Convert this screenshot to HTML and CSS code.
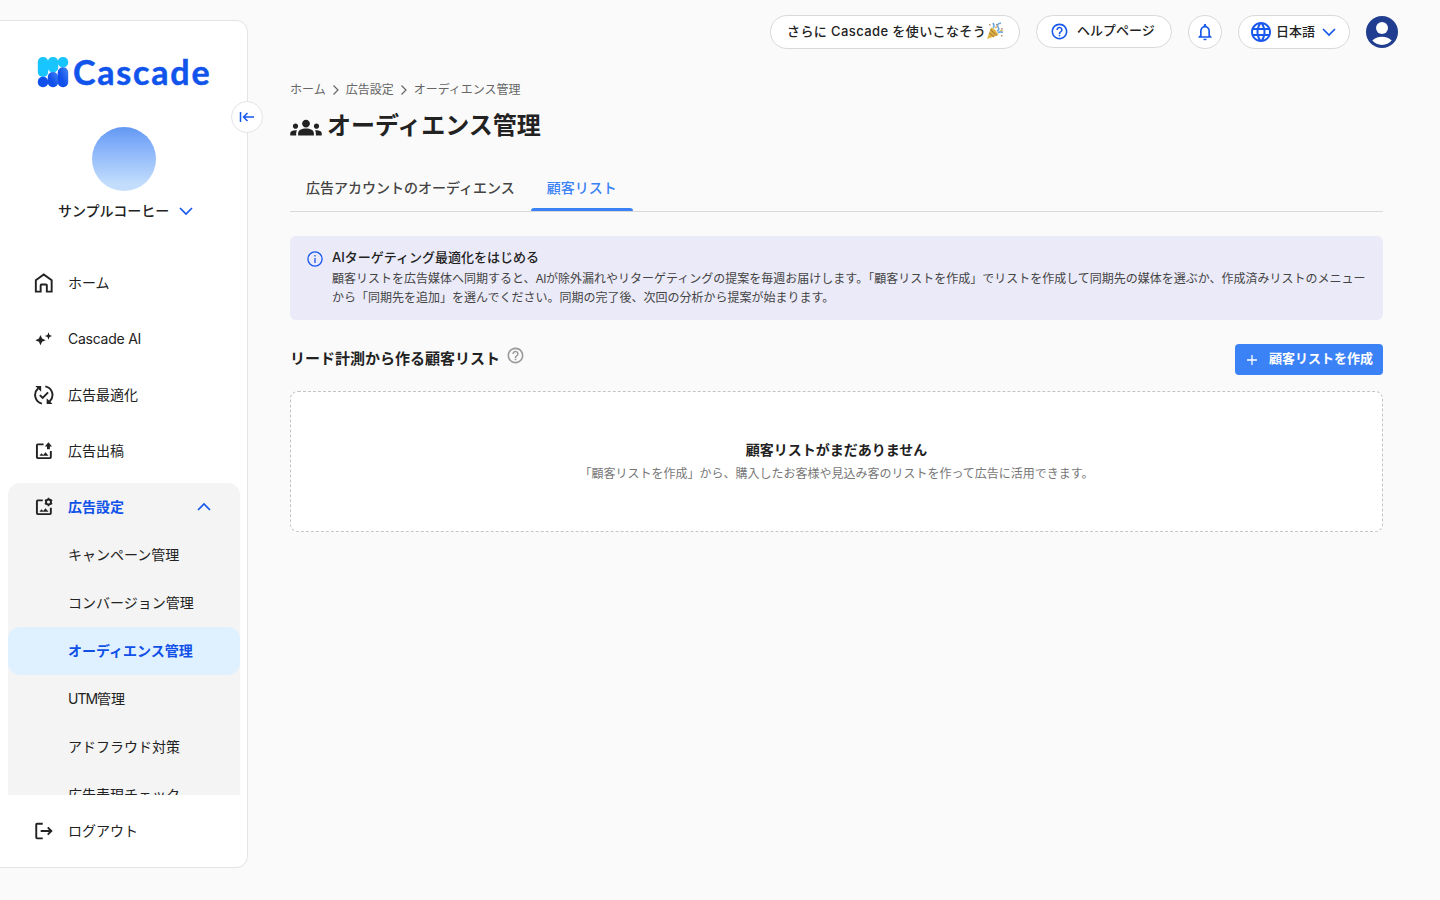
FILE: index.html
```html
<!DOCTYPE html>
<html lang="ja">
<head>
<meta charset="utf-8">
<title>オーディエンス管理 | Cascade</title>
<link rel="stylesheet" href="styles.css">
</head>
<body>
<div class="app">
  <aside class="sidebar">
    <div class="logo">
      <svg class="logo-mark" viewBox="0 0 30 30">
        <defs><linearGradient id="lg" x1="0" y1="1" x2="1" y2="0"><stop offset=".4" stop-color="#1150ea"/><stop offset="1" stop-color="#4387f6"/></linearGradient></defs>
        <rect x="-.2" y="0" width="10.400" height="20" rx="5" fill="#18c5ff"/>
        <rect x="9.800" y="0" width="10.400" height="15.500" rx="5" fill="#18c5ff"/>
        <rect x="19.800" y="0" width="10.400" height="10.400" rx="5" fill="#18c5ff"/>
        <rect x="-.2" y="19.800" width="10.400" height="10.400" rx="5" fill="#1150ea"/>
        <rect x="9.800" y="15" width="10.400" height="15.200" rx="5" fill="url(#lg)"/>
        <rect x="19.800" y="10.300" width="10.400" height="19.900" rx="5" fill="url(#lg)"/>
      </svg>
      <span class="logo-text">Cascade</span>
    </div>
    <div class="avatar"></div>
    <div class="workspace"><span>サンプルコーヒー</span><svg class="chev" viewBox="0 0 14 14"><path d="M1 4l6 6 6-6"/></svg></div>
    <nav class="nav">
      <a class="item"><svg class="ico line" viewBox="0 0 24 24"><path d="M2.200 22.300V8.700L11.700 1.700l9.500 7v13.600h-5.800v-7.500q0-1-1-1H9q-1 0-1 1v7.500z"/></svg>ホーム</a>
      <a class="item"><svg class="ico" viewBox="0 0 24 24"><path d="M7.800 7.200l1.900 4.300L14 13.400l-4.300 1.900-1.900 4.300-1.900-4.300-4.300-1.900 4.300-1.900zM17.400 4l1.200 3.200 3.200 1.200-3.200 1.200-1.200 3.200-1.200-3.200L13 8.400l3.200-1.200z"/></svg><span class="latin">Cascade AI</span></a>
      <a class="item"><svg class="ico line" viewBox="0 0 24 24"><path d="M9.500 22.300A10.600 10.600 0 0 1 4.800 4.200M13.600 1.600a10.600 10.600 0 0 1 5.100 18.200M7 12.200l3.400 3.400 6.500-6.700"/><path class="solid" d="M1.600 1.200h7v7zM22.200 22.800h-7v-7z"/></svg>広告最適化</a>
      <a class="item"><svg class="ico line" viewBox="0 0 24 24"><path d="M11.500 4H4.500q-1 0-1 1v14.500q0 1 1 1h14.700q1 0 1-1V12"/><path class="fill" d="M6.500 17.700l2.500-3 2 2 2.800-3.200 3.600 4.200zM15.600 10h3.400V6.500h2.700l-4.400-5-4.400 5h2.700z"/></svg>広告出稿</a>
      <div class="group">
        <a class="item head"><svg class="ico line" viewBox="0 0 24 24"><path d="M10.500 4h-6q-1 0-1 1v14.500q0 1 1 1h14.700q1 0 1-1V13"/><path class="fill" d="M6.500 17.700l2.500-3 2 2 2.800-3.200 3.600 4.200z"/><circle cx="17.400" cy="6" r="3"/><path class="teeth" d="M17.400 1v1.800M17.400 9.200V11M13 3.500l1.600.9M20.200 7.600l1.600.9M13 8.500l1.600-.9M20.200 4.400l1.600-.9"/></svg><b>広告設定</b><svg class="chev up" viewBox="0 0 14 14"><path d="M1 10l6-6 6 6"/></svg></a>
        <a class="sub">キャンペーン管理</a>
        <a class="sub">コンバージョン管理</a>
        <a class="sub active">オーディエンス管理</a>
        <a class="sub"><span class="utm">UTM</span>管理</a>
        <a class="sub">アドフラウド対策</a>
        <a class="sub">広告表現チェック</a>
      </div>
    </nav>
    <a class="item logout"><svg class="ico line" viewBox="0 0 24 24"><path d="M10.500 3.200H3.700q-1 0-1 1v15.600q0 1 1 1h6.800M8 12h12.800M16.500 7.700l4.300 4.300-4.300 4.300"/></svg>ログアウト</a>
    <button class="collapse"><svg viewBox="0 0 16 16"><path d="M1.500 3v10M15 8H5M8.500 4L4.500 8l4 4"/></svg></button>
  </aside>
  <div class="page">
    <header class="topbar">
      <div class="pill promo"><span>さらに <span class="brand">Cascade</span> を使いこなそう</span><svg class="party" viewBox="0 0 18 18"><path d="M1 17L5 5.500Q10 7 12.500 13z" fill="#e3b441"/><path d="M3.200 11l5 4M4.400 7.500l6.200 6" stroke="#a9843b" stroke-width="1.100"/><path d="M7 6q2-2 0-5M11 9q3-1 1-4t3-4M12 11q2-2 5-.5" fill="none" stroke="#6da7df" stroke-width="1.600"/><path d="M3 2h1.500v1.500H3zM10 2h1.500v1.500H10zM15 6h1.600v1.600H15zM15 13h1.600v1.600H15z" fill="#bd9478"/><path d="M9 6l2-1.500M14 9l3-1" stroke="#e0b352" stroke-width="1.300"/></svg></div>
      <div class="pill help"><svg class="help-ico" viewBox="0 0 24 24"><path d="M11 18h2v-2h-2v2zm1-16C6.480 2 2 6.480 2 12s4.480 10 10 10 10-4.480 10-10S17.520 2 12 2zm0 18c-4.410 0-8-3.590-8-8s3.590-8 8-8 8 3.590 8 8-3.590 8-8 8zm0-14c-2.210 0-4 1.790-4 4h2c0-1.100.9-2 2-2s2 .9 2 2c0 2-3 1.750-3 5h2c0-2.250 3-2.500 3-5 0-2.210-1.790-4-4-4z"/></svg><span>ヘルプページ</span></div>
      <div class="pill bell"><svg viewBox="0 0 24 24"><path d="M12 22c1.100 0 2-.9 2-2h-4c0 1.100.9 2 2 2zm6-6v-5c0-3.070-1.630-5.640-4.500-6.320V4c0-.83-.67-1.500-1.500-1.500s-1.500.67-1.500 1.500v.68C7.640 5.360 6 7.920 6 11v5l-2 2v1h16v-1l-2-2zm-2 1H8v-6c0-2.480 1.510-4.500 4-4.500s4 2.020 4 4.500v6z"/></svg></div>
      <div class="pill lang"><svg class="globe" viewBox="0 0 24 24"><path d="M11.990 2C6.470 2 2 6.480 2 12s4.470 10 9.990 10C17.520 22 22 17.520 22 12S17.520 2 11.990 2zm6.930 6h-2.950c-.32-1.250-.78-2.450-1.380-3.560 1.840.63 3.370 1.910 4.330 3.560zM12 4.040c.83 1.200 1.480 2.530 1.910 3.960h-3.820c.43-1.430 1.080-2.760 1.910-3.960zM4.260 14C4.100 13.360 4 12.690 4 12s.1-1.360.26-2h3.380c-.08.660-.14 1.320-.14 2s.06 1.340.14 2H4.260zm.82 2h2.950c.32 1.250.78 2.450 1.380 3.560-1.840-.63-3.370-1.900-4.330-3.560zm2.950-8H5.080c.96-1.660 2.490-2.930 4.330-3.560C8.810 5.550 8.350 6.750 8.030 8zM12 19.960c-.83-1.200-1.480-2.530-1.910-3.960h3.820c-.43 1.430-1.080 2.760-1.910 3.960zM14.340 14H9.660c-.09-.66-.16-1.320-.16-2s.07-1.350.16-2h4.680c.09.650.16 1.320.16 2s-.07 1.340-.16 2zm.25 5.560c.6-1.110 1.060-2.310 1.380-3.560h2.950c-.96 1.650-2.490 2.930-4.330 3.560zM16.360 14c.08-.66.14-1.320.14-2s-.06-1.340-.14-2h3.380c.16.640.26 1.310.26 2s-.1 1.360-.26 2h-3.380z"/></svg><span>日本語</span><svg class="chev" viewBox="0 0 14 14"><path d="M1 4l6 6 6-6"/></svg></div>
      <svg class="user" viewBox="0 0 32 32"><circle cx="16" cy="16" r="16"/><circle cx="16" cy="12" r="6" fill="#fff"/><path fill="#fff" d="M6.300 24.500C8.500 22 12 20.700 16 20.700s7.500 1.300 9.700 3.800C23.400 27.300 19.900 28.900 16 28.900s-7.400-1.600-9.700-4.400z"/></svg>
    </header>
    <main class="main">
      <div class="crumbs"><span>ホーム</span><svg viewBox="0 0 8 12"><path d="M1.500 1.500L6 6l-4.500 4.500"/></svg><span>広告設定</span><svg viewBox="0 0 8 12"><path d="M1.500 1.500L6 6l-4.500 4.500"/></svg><span>オーディエンス管理</span></div>
      <h1><svg viewBox="0 4 24 16"><path d="M12 12.750c1.630 0 3.070.39 4.240.9 1.080.48 1.760 1.560 1.760 2.730V18H6v-1.610c0-1.180.68-2.260 1.760-2.730 1.170-.52 2.610-.91 4.240-.91zM4 13c1.100 0 2-.9 2-2s-.9-2-2-2-2 .9-2 2 .9 2 2 2zm1.130 1.100C4.760 14.040 4.390 14 4 14c-.99 0-1.930.21-2.780.58C.48 14.900 0 15.620 0 16.430V18h4.500v-1.610c0-.83.23-1.610.63-2.290zM20 13c1.100 0 2-.9 2-2s-.9-2-2-2-2 .9-2 2 .9 2 2 2zm4 3.430c0-.81-.48-1.530-1.220-1.850C21.930 14.210 20.990 14 20 14c-.39 0-.76.04-1.130.1.400.68.630 1.460.630 2.290V18H24v-1.570zM12 6c1.660 0 3 1.340 3 3s-1.340 3-3 3-3-1.340-3-3 1.340-3 3-3z"/></svg>オーディエンス管理</h1>
      <div class="tabs"><div class="tab">広告アカウントのオーディエンス</div><div class="tab on">顧客リスト</div></div>
      <section class="notice">
        <svg viewBox="0 0 16 16"><circle cx="8" cy="8" r="7.100"/><path d="M8 7v5M8 4v1.600"/></svg>
        <div><div class="notice-title">AIターゲティング最適化をはじめる</div><p>顧客リストを広告媒体へ同期すると、<span class="ai">AI</span>が除外漏れやリターゲティングの提案を毎週お届けします。「顧客リストを作成」でリストを作成して同期先の媒体を選ぶか、作成済みリストのメニューから「同期先を追加」を選んでください。同期の完了後、次回の分析から提案が始まります。</p></div>
      </section>
      <div class="section-head">
        <h2>リード計測から作る顧客リスト</h2>
        <svg class="hint" viewBox="0 0 24 24"><path d="M11 18h2v-2h-2v2zm1-16C6.480 2 2 6.480 2 12s4.480 10 10 10 10-4.480 10-10S17.520 2 12 2zm0 18c-4.410 0-8-3.590-8-8s3.590-8 8-8 8 3.590 8 8-3.590 8-8 8zm0-14c-2.210 0-4 1.790-4 4h2c0-1.100.9-2 2-2s2 .9 2 2c0 2-3 1.750-3 5h2c0-2.250 3-2.500 3-5 0-2.210-1.790-4-4-4z"/></svg>
        <button class="create"><svg viewBox="0 0 10 10"><path d="M5 0v10M0 5h10"/></svg><span>顧客リストを作成</span></button>
      </div>
      <section class="empty"><strong>顧客リストがまだありません</strong><p>「顧客リストを作成」から、購入したお客様や見込み客のリストを作って広告に活用できます。</p></section>
    </main>
  </div>
</div>
</body>
</html>
```
FILE: styles.css
```css
* { box-sizing: border-box; }
body { margin: 0; background: #fafafa; color: #222; font: 14px/20px Inter, "Noto Sans CJK JP", sans-serif; }
svg { display: block; flex: none; }
p, h1, h2 { margin: 0; }
button { font: inherit; border: 0; padding: 0; }
.app { display: flex; height: 900px; overflow: hidden; }
.sidebar { position: relative; width: 248px; height: 848px; margin-top: 20px; flex: none; display: flex; flex-direction: column; background: #fff; border: 1px solid #e4e4e4; border-left: 0; border-radius: 0 12px 12px 0; }
.logo { display: flex; align-items: center; height: 30px; margin: 36px 0 0 38px; gap: 5px; }
.logo-mark { width: 30px; height: 30px; overflow: visible; }
.logo-text { font: 700 34px/30px Lato, sans-serif; color: #1154ec; letter-spacing: 1.8px; -webkit-text-stroke: .5px #1154ec; }
.avatar { width: 64px; height: 64px; margin: 40px 0 0 92px; border-radius: 50%; background: linear-gradient(#6298f2, #80adf9 25%, #a4c8fb 60%, #c3defd 90%); }
.workspace { display: flex; align-items: center; gap: 10px; height: 20px; margin: 10px 0 0 58px; font-weight: 500; }
.chev { width: 14px; height: 14px; fill: none; stroke: #1757ec; stroke-width: 1.700; }
.nav { margin: 38px 7px 0 8px; height: 536px; overflow: hidden; flex: none; }
.item { display: flex; align-items: center; height: 48px; padding-left: 26px; gap: 14px; margin-bottom: 8px; }
.ico { width: 20px; height: 20px; fill: #222; }
.line { fill: none; stroke: #222; stroke-width: 2.300; }
.solid { fill: #222; stroke: none; }
.fill { fill: #222; stroke: none; }
.teeth { stroke-width: 1.800; }
.latin { letter-spacing: -.25px; }
.utm { letter-spacing: -1px; }
.ai { letter-spacing: -.5px; }
.group { background: #f4f4f4; border-radius: 12px 12px 0 0; }
.head { margin: 0; color: #0f51e8; }
.up { margin-left: 59px; }
.sub { display: block; height: 48px; line-height: 47px; padding-left: 60px; }
.active { background: #dff0ff; border-radius: 12px; color: #0f51e8; font-weight: 700; }
.logout { margin: 12px 0 0 8px; }
.collapse { position: absolute; left: 231px; top: 80px; width: 32px; height: 32px; border: 1px solid #e4e4e4; border-radius: 50%; background: #fff; display: grid; place-items: center; }
.collapse svg { width: 16px; height: 16px; fill: none; stroke: #1757ec; stroke-width: 1.500; }
.page { flex: 1; min-width: 0; }
.topbar { display: flex; justify-content: flex-end; gap: 16px; padding: 15px 42px 0 0; height: 49px; font-size: 13px; font-weight: 500; }
.pill { display: flex; align-items: center; height: 34px; border: 1px solid #d9d9d9; border-radius: 17px; background: #fff; }
.promo { width: 250px; padding-left: 16px; letter-spacing: .4px; white-space: nowrap; }
.promo > span, .lang > span { padding-bottom: 2px; }
.party { width: 18px; height: 18px; margin-bottom: 2px; }
.help { width: 136px; height: 33px; padding-left: 13px; gap: 8px; }
.help > span { padding-bottom: 3px; }
.help-ico { width: 19px; height: 19px; fill: #1757ec; }
.bell { width: 34px; justify-content: center; }
.bell svg { width: 20px; height: 20px; fill: #1757ec; }
.lang { width: 112px; padding-left: 10px; gap: 3px; }
.globe { width: 24px; height: 24px; fill: #1757ec; }
.lang .chev { margin-left: 4px; }
.user { width: 32px; height: 32px; margin-top: 1px; fill: #203d8f; }
.main { margin: 31px 57px 0 42px; }
.crumbs { display: flex; align-items: center; height: 20px; gap: 6px; font-size: 12px; color: #666; }
.crumbs svg { width: 8px; height: 12px; fill: none; stroke: #666; stroke-width: 1.200; }
h1 { display: flex; align-items: center; gap: 5px; height: 36px; margin-top: 8px; font-size: 24px; font-weight: 700; }
h1 svg { width: 32px; height: 21px; fill: #222; margin-top: 2px; }
.tabs { display: flex; height: 47px; margin-top: 21px; border-bottom: 1px solid #d9d9d9; }
.tab { padding: 13px 16px 0; height: 46px; font-weight: 500; color: #444; }
.on { color: #3b82f6; position: relative; }
.on::after { content: ""; position: absolute; left: 0; right: 0; bottom: 0; height: 3px; background: #3b82f6; border-radius: 3px 3px 0 0; }
.notice { display: flex; height: 84px; margin-top: 24px; padding: 11px 16px 0 17px; gap: 9px; background: #ebeaf8; border-radius: 6px; }
.notice > svg { width: 16px; height: 16px; margin-top: 4px; fill: none; stroke: #1757ec; stroke-width: 1.300; }
.notice-title { font-size: 13px; line-height: 20px; font-weight: 500; }
.notice p { font-size: 12px; line-height: 19px; margin-top: 2px; color: #444; }
.section-head { display: flex; height: 31px; margin-top: 24px; }
h2 { font-size: 15px; font-weight: 700; line-height: 30px; }
.hint { width: 19px; height: 19px; margin: 2px 0 0 6px; fill: #999; }
.create { display: flex; align-items: center; width: 148px; height: 31px; margin-left: auto; padding-left: 12px; gap: 12px; border-radius: 4px; background: #3b82f6; color: #fff; font-size: 13px; font-weight: 700; }
.create svg { width: 10px; height: 10px; fill: none; stroke: #fff; stroke-width: 1.300; }
.create span { padding-bottom: 4px; }
.empty { height: 141px; margin-top: 16px; padding-top: 48px; border: 1px dashed #c4c4c4; border-radius: 8px; background: #fff; text-align: center; }
.empty strong { display: block; font-weight: 700; }
.empty p { font-size: 12px; line-height: 20px; margin-top: 4px; color: #777; }
```
